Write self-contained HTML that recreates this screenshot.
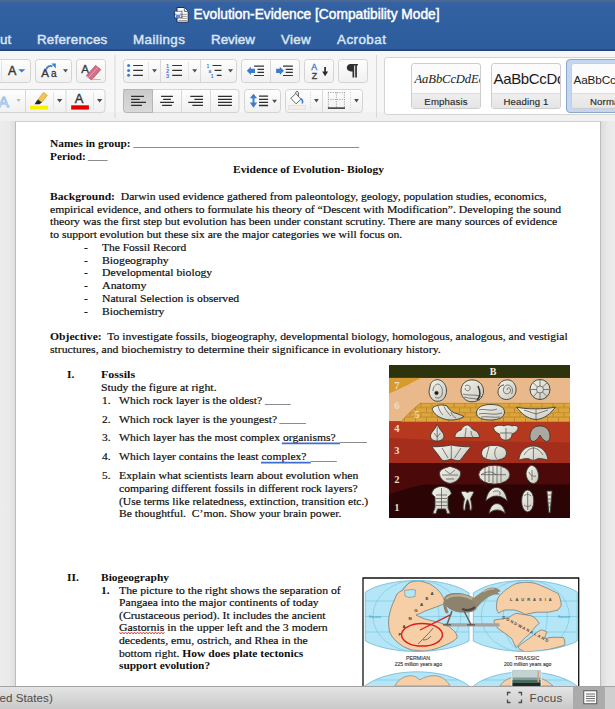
<!DOCTYPE html>
<html><head><meta charset="utf-8">
<style>
*{margin:0;padding:0;box-sizing:border-box}
html,body{width:615px;height:709px;overflow:hidden;background:#e9e9e9;font-family:"Liberation Sans",sans-serif}
.abs{position:absolute}
#title{left:0;top:0;width:615px;height:51px;background:linear-gradient(#4a6890 0,#4a6890 1.5px,#3462a2 2.5px,#3060a0 20px,#2e5c9d 49px,#22427a 50px,#22427a 51px)}
.tt{color:#fff;font-size:13.75px;white-space:nowrap;-webkit-text-stroke:0.45px #fff}
.tab{color:#dde5f2;font-size:13.4px;white-space:nowrap;top:32px;-webkit-text-stroke:0.45px #dde5f2}
#ribbon{left:0;top:51px;width:615px;height:70px;background:#f6f6f6}
#rband{left:0;top:112px;width:615px;height:9px;background:#f1f1f1}
#rline{left:0;top:121px;width:615px;height:1px;background:#c9c9c9}
#page{left:15px;top:121px;width:586px;height:565px;background:#fff;border-left:1px solid #bdbdbd;border-right:1px solid #bdbdbd;border-top:1px solid #cfcfcf}
#mleft{left:0;top:121px;width:15px;height:565px;background:linear-gradient(to right,#ececec 0,#eaeaea 9px,#dedede 15px)}
#mright{left:601px;top:121px;width:14px;height:565px;background:linear-gradient(to right,#dcdcdc 0,#e8e8e8 6px,#ececec 14px)}
#status{left:0;top:686px;width:615px;height:23px;background:linear-gradient(#e4e4e4,#c9c9c9);border-top:1px solid #a3a3a3}
.doc{font-family:"Liberation Serif",serif;font-size:11.5px;color:#0d0d0d;white-space:nowrap;line-height:13px;-webkit-text-stroke:0.18px #0d0d0d}
.b{font-weight:bold}
.doc b{-webkit-text-stroke:0}

.btn{background:linear-gradient(#fdfdfd,#f1f1f1);border:1px solid #d2d2d2;border-radius:3px}
.vsep{width:1px;background:#dedede}
.card{background:#fbfbfb;border:1px solid #cdcdcd;border-radius:3px;overflow:hidden}
.card .lab{position:absolute;left:0;right:0;bottom:0;height:15px;background:linear-gradient(#eeeeee,#e5e5e5);border-top:1px solid #dedede;font-size:9.6px;color:#2a2a2a;text-align:center;line-height:15px;letter-spacing:0.15px;-webkit-text-stroke:0.15px #2a2a2a}
.smp{position:absolute;white-space:nowrap;color:#222}
</style></head><body>
<div id="title" class="abs"></div>
<svg class="abs" style="left:174px;top:7px" width="15" height="16"><path d="M3 0.5H10.5L14.2 4.2V15.2H3Z" fill="#fbfbfb" stroke="#1b2f55" stroke-width="1"/><path d="M10.3 0.8V4.4H14" fill="#dfe6f0" stroke="#1b2f55" stroke-width="0.7"/><path d="M8 7.4h5M8 9.4h5M8 11.4h5M4.5 13.5h8.5" stroke="#8d8a80" stroke-width="0.8"/><rect x="0.6" y="4.3" width="7.3" height="6.6" fill="#eef3fb" stroke="#1b2f55" stroke-width="0.8"/><rect x="1" y="4.7" width="6.5" height="1.4" fill="#ffffff"/><path d="M1.6 6.6l1.3 3.6l1.1-2.4l1.1 2.4l1.3-3.6" stroke="#3a68b0" stroke-width="0.9" fill="none"/></svg>
<div class="abs tt" style="left:193.5px;top:6.5px">Evolution-Evidence [Compatibility Mode]</div>
<div class="abs tab" style="left:0px">ut</div>
<div class="abs tab" style="left:37px;letter-spacing:0.2px">References</div>
<div class="abs tab" style="left:133px;letter-spacing:0.4px">Mailings</div>
<div class="abs tab" style="left:211px">Review</div>
<div class="abs tab" style="left:281px;letter-spacing:0.3px">View</div>
<div class="abs tab" style="left:337px;letter-spacing:0.45px">Acrobat</div>
<div id="ribbon" class="abs"></div>
<div id="rband" class="abs"></div>
<div id="rline" class="abs"></div>

<svg class="abs" style="left:0;top:51px" width="615" height="70" viewBox="0 51 615 70">
<defs>
<linearGradient id="bg1" x1="0" y1="0" x2="0" y2="1"><stop offset="0" stop-color="#fefefe"/><stop offset="1" stop-color="#f0f0f0"/></linearGradient>
<linearGradient id="sel" x1="0" y1="0" x2="0" y2="1"><stop offset="0" stop-color="#cbcbcb"/><stop offset="1" stop-color="#d9d9d9"/></linearGradient>
</defs>
<g fill="url(#bg1)" stroke="#d3d3d3" stroke-width="1">
<rect x="-5.5" y="59.5" width="36" height="23" rx="3"/>
<rect x="35.5" y="59.5" width="36" height="23" rx="3"/>
<rect x="76.5" y="59.5" width="29" height="23" rx="3"/>
<rect x="123.5" y="59.5" width="113" height="23" rx="3"/>
<rect x="241.5" y="59.5" width="58" height="23" rx="3"/>
<rect x="304.5" y="59.5" width="29" height="23" rx="3"/>
<rect x="338.5" y="59.5" width="29" height="23" rx="3"/>
<rect x="-5.5" y="89.5" width="110.5" height="23" rx="3"/>
<rect x="123.5" y="89.5" width="115.5" height="23" rx="3"/>
<rect x="244.5" y="89.5" width="36" height="23" rx="3"/>
<rect x="285.5" y="89.5" width="77" height="23" rx="3"/>
</g>
<path d="M123.5 89.5 H152.5 V112.5 H126.5 A3 3 0 0 1 123.5 109.5 V92.5 A3 3 0 0 1 126.5 89.5Z" fill="url(#sel)" stroke="#b5b5b5" stroke-width="1"/>
<g stroke="#d8d8d8" stroke-width="1">
<path d="M115 55V118M376.5 55V118"/>
<path d="M160.5 60V82M200.5 60V82M270.5 60V82M181.5 90V112M210.5 90V112M322.5 90V112M25.5 90V112M66 90V112"/>
</g>
<g stroke="#e4e4e4" stroke-width="1">
<path d="M1.5 61V81M148.5 62V80M188.5 62V80M53.5 92V110M93.5 92V110"/>
</g>
<g stroke="#d0d0d0" stroke-width="1" stroke-dasharray="1 1.5">
<path d="M310.5 92V110M350.5 92V110"/>
</g>
<!-- dropdown arrows -->
<g fill="#4d4d4d">
<path d="M63 69.2h5l-2.5 3.4z"/>
<path d="M152 69.2h5l-2.5 3.4z"/>
<path d="M192.2 69.2h5l-2.5 3.4z"/>
<path d="M228 69.2h5l-2.5 3.4z"/>
<path d="M57 99h5.3l-2.65 3.6z"/>
<path d="M97 99h5.3l-2.65 3.6z"/>
<path d="M272.2 99.7h4.8l-2.4 3.2z"/>
<path d="M314 99.1h4.8l-2.4 3.4z"/>
<path d="M354.1 99.1h4.8l-2.4 3.4z"/>
</g>
<path d="M16.5 99h4.2l-2.1 3.2z" fill="#b9b9b9"/>
<!-- font size A -->
<text x="8" y="75" font-family="Liberation Sans" font-size="12.5" fill="#353535" stroke="#353535" stroke-width="0.4">A</text>
<path d="M18.2 69.2h7.1l-3.55 3.4z" fill="#3d7ccc"/>
<!-- change case Aa -->
<text x="41.2" y="76.8" font-family="Liberation Sans" font-size="11.5" fill="#353535" stroke="#353535" stroke-width="0.35">A</text>
<text x="51" y="76.8" font-family="Liberation Sans" font-size="10" fill="#353535" stroke="#353535" stroke-width="0.3">a</text>
<path d="M46.2 69.5 C47 66.5 50 65.3 52.5 66.3" stroke="#3d7ccc" stroke-width="1.8" fill="none"/>
<path d="M51.5 63.5 L55.8 63.5 L55.8 68.5 Z" fill="#3d7ccc"/>
<!-- clear formatting -->
<text x="81.2" y="72.6" font-family="Liberation Sans" font-size="11.5" fill="#3a3a3a" stroke="#3a3a3a" stroke-width="0.3">A</text>
<path d="M86.3 75.8 L95.6 65.4 L100.8 69.6 L91.5 80 Z" fill="#d66c86" stroke="#a94561" stroke-width="0.7"/>
<path d="M86.3 75.8 L88.5 77.7 L97.8 67.3" stroke="#efb1c0" stroke-width="0.8" fill="none"/>
<path d="M93 79.5H100.5" stroke="#aaa" stroke-width="0.8"/>
<!-- bullets -->
<g fill="#3d7ccc"><circle cx="128.6" cy="65.5" r="1.5"/><circle cx="128.6" cy="70.4" r="1.5"/><circle cx="128.6" cy="75.3" r="1.5"/></g>
<g stroke="#333" stroke-width="1.2"><path d="M133.2 65.5H142.9M133.2 70.4H142.9M133.2 75.3H142.9"/></g>
<g fill="#3d7ccc" font-family="Liberation Sans" font-weight="bold" font-size="5.6"><text x="165.9" y="67.6">1</text><text x="165.9" y="72.6">2</text><text x="165.9" y="77.6">3</text></g>
<g stroke="#333" stroke-width="1.2"><path d="M172.2 65.5H182M172.2 70.4H182M172.2 75.3H182"/></g>
<g fill="#3d7ccc" font-family="Liberation Sans" font-weight="bold" font-size="5"><text x="206.5" y="67.8">1</text><text x="208.6" y="73">a</text><text x="210.8" y="77.8">1</text></g>
<g stroke="#333" stroke-width="1.2"><path d="M212.5 65.5H221.5M214.6 70.4H221.5M216.8 75.3H221.5"/></g>
<!-- indent -->
<path d="M246.8 70.8 L250.9 66.7 V68.8 H255 V72.9 H250.9 V75.1 Z" fill="#3d7ccc"/>
<g stroke="#333" stroke-width="1.2"><path d="M254.1 66.2H264M257.5 69.3H264M257.5 72.4H264M254.1 75.5H264"/></g>
<path d="M283.9 70.8 L279.8 66.7 V68.8 H276.1 V72.9 H279.8 V75.1 Z" fill="#3d7ccc"/>
<g stroke="#333" stroke-width="1.2"><path d="M283 66.2H292.9M285.7 69.3H292.9M285.7 72.4H292.9M283 75.5H292.9"/></g>
<!-- sort -->
<text x="311.3" y="69.8" font-family="Liberation Sans" font-size="8.8" fill="#3d7ccc" stroke="#3d7ccc" stroke-width="0.35">A</text>
<text x="311.8" y="78.9" font-family="Liberation Sans" font-size="8.8" fill="#444" stroke="#444" stroke-width="0.35">Z</text>
<path d="M325.1 67V73" stroke="#2a2a2a" stroke-width="1.7"/>
<path d="M322.1 71.6H328.1L325.1 76.2Z" fill="#2a2a2a"/>
<!-- pilcrow -->
<path d="M350.5 64 H357.9 V65.6 H356.9 V77.5 H355.2 V65.6 H354.2 V77.5 H352.5 V71.6 C349 71.6 346.8 70 346.8 67.8 C346.8 65.6 348.7 64 350.5 64 Z" fill="#303030"/>
<!-- text effects A outline -->
<text x="-1.5" y="106.6" font-family="Liberation Sans" font-size="15.5" fill="#fbfdff" stroke="#96bfe8" stroke-width="0.9">A</text>
<!-- highlighter -->
<path d="M38 99.5 L43.5 92.3 L47.3 95.3 L41.8 102.5 Z" fill="#f3c44e" stroke="#c89a26" stroke-width="0.6"/>
<path d="M38 99.5 L41.8 102.5 L39.5 104.2 L34.6 104.2 L36.6 101 Z" fill="#252525"/>
<rect x="30" y="105.7" width="18" height="3.9" fill="#f6f300"/>
<!-- font color -->
<text x="74.8" y="103.2" font-family="Liberation Sans" font-size="13" fill="#333" stroke="#333" stroke-width="0.35">A</text>
<rect x="71.2" y="105.3" width="17.7" height="4.3" fill="#e30000"/>
<!-- align -->
<g stroke="#2e2e2e" stroke-width="1.3">
<path d="M131.1 96.3H144M131.1 99.3H139.7M131.1 102.3H146M131.1 105.4H142"/>
<path d="M161.1 96.3H172.9M163.1 99.3H170.9M160.1 102.3H173.9M162.1 105.4H171.9"/>
<path d="M190.3 96.4H203M194.4 99.4H203M188.2 102.3H203M192.4 105.4H203"/>
<path d="M218 96.4H231.9M218 99.4H231.9M218 102.3H231.9M218 105.4H231.9"/>
</g>
<!-- line spacing -->
<path d="M253.5 93.8 L257.2 98.2 H249.8 Z M253.5 107.7 L257.2 102.6 H249.8 Z" fill="#3d7ccc"/>
<path d="M253.5 97V103.5" stroke="#3d7ccc" stroke-width="2"/>
<g stroke="#2e2e2e" stroke-width="1.3"><path d="M259 96.2H268.1M259 99.3H268.1M259 102.4H268.1M259 105.5H268.1"/></g>
<!-- shading -->
<path d="M290.8 98.2 L295.8 93.6 L301 99.2 L296 103.8 Z" fill="#fff" stroke="#5a5a5a" stroke-width="0.9"/>
<path d="M295.8 93.6 C295.5 91 298 90.6 298.3 92.6 L298.3 96.5" stroke="#444" stroke-width="0.9" fill="none"/>
<path d="M300.3 98.5 C302.5 99.5 303 101.5 302.2 103.5" stroke="#3d7ccc" stroke-width="1.6" fill="none"/>
<rect x="288.5" y="105.3" width="17" height="3.9" fill="#f2efe8" stroke="#d9d9d9" stroke-width="0.6"/>
<!-- borders -->
<g stroke="#8d8d8d" stroke-width="0.9" stroke-dasharray="1 1.3">
<path d="M328.4 92.2V107M336.4 92.2V107M344.4 92.2V107M328 92.6H345M328 99.5H345"/>
</g>
<path d="M327.9 108.1H345" stroke="#222" stroke-width="1.4"/>
</svg>

<!-- styles gallery -->
<div class="abs" style="left:384px;top:57px;width:240px;height:58px;background:#fff;border:1px solid #d5d5d5;border-radius:3px"></div>
<div class="abs card" style="left:411px;top:63px;width:70px;height:46px"><div class="lab">Emphasis</div><div class="smp" style="font-family:'Liberation Serif',serif;font-style:italic;font-size:12.6px;left:2.5px;top:8px;letter-spacing:-0.1px">AaBbCcDdEe</div></div>
<div class="abs card" style="left:491px;top:63px;width:70px;height:46px"><div class="lab">Heading 1</div><div class="smp" style="font-size:15px;left:1.5px;top:6px;letter-spacing:-0.35px;color:#1a1a1a">AaBbCcDd</div></div>
<div class="abs" style="left:566px;top:59px;width:60px;height:54px;background:#c5d7ee;border:1px solid #8aa6cc;border-radius:4px"></div>
<div class="abs card" style="left:571px;top:63px;width:60px;height:46px"><div class="lab" style="text-align:left;padding-left:18px">Normal</div><div class="smp" style="font-size:11.7px;left:1.5px;top:9px;letter-spacing:-0.1px">AaBbCcDd</div></div>

<div id="mleft" class="abs"></div><div id="mright" class="abs"></div><div id="page" class="abs"></div>
<!--DOC-->
<div class="abs doc" style="left:49.8px;top:136.90px;font-size:11.0px;transform:scaleX(1.0329);transform-origin:0 0"><b>Names in group:</b></div>
<div class="abs doc" style="left:49.8px;top:149.80px;font-size:11.0px;transform:scaleX(1.0250);transform-origin:0 0"><b>Period:</b></div>
<div class="abs doc" style="left:233.4px;top:162.50px;font-size:11.0px;transform:scaleX(1.0396);transform-origin:0 0"><b>Evidence of Evolution- Biology</b></div>
<div class="abs doc" style="left:49.8px;top:189.80px;font-size:11.0px;transform:scaleX(1.0560);transform-origin:0 0"><b>Background:</b>&nbsp; Darwin used evidence gathered from paleontology, geology, population studies, economics,</div>
<div class="abs doc" style="left:49.8px;top:202.55px;font-size:11.0px;transform:scaleX(1.0605);transform-origin:0 0">empirical evidence, and others to formulate his theory of “Descent with Modification”. Developing the sound</div>
<div class="abs doc" style="left:49.8px;top:215.30px;font-size:11.0px;transform:scaleX(1.0664);transform-origin:0 0">theory was the first step but evolution has been under constant scrutiny. There are many sources of evidence</div>
<div class="abs doc" style="left:49.8px;top:228.05px;font-size:11.0px;transform:scaleX(1.0577);transform-origin:0 0">to support evolution but these six are the major categories we will focus on.</div>
<div class="abs doc" style="left:84.3px;top:240.80px;font-size:11.0px;transform:scaleX(1.0400);transform-origin:0 0">-</div>
<div class="abs doc" style="left:101.5px;top:240.80px;font-size:11.0px;transform:scaleX(1.0437);transform-origin:0 0">The Fossil Record</div>
<div class="abs doc" style="left:84.3px;top:253.55px;font-size:11.0px;transform:scaleX(1.0400);transform-origin:0 0">-</div>
<div class="abs doc" style="left:101.5px;top:253.55px;font-size:11.0px;transform:scaleX(1.0701);transform-origin:0 0">Biogeography</div>
<div class="abs doc" style="left:84.3px;top:266.30px;font-size:11.0px;transform:scaleX(1.0400);transform-origin:0 0">-</div>
<div class="abs doc" style="left:101.5px;top:266.30px;font-size:11.0px;transform:scaleX(1.0641);transform-origin:0 0">Developmental biology</div>
<div class="abs doc" style="left:84.3px;top:279.05px;font-size:11.0px;transform:scaleX(1.0400);transform-origin:0 0">-</div>
<div class="abs doc" style="left:101.5px;top:279.05px;font-size:11.0px;transform:scaleX(1.0866);transform-origin:0 0">Anatomy</div>
<div class="abs doc" style="left:84.3px;top:291.80px;font-size:11.0px;transform:scaleX(1.0400);transform-origin:0 0">-</div>
<div class="abs doc" style="left:101.5px;top:291.80px;font-size:11.0px;transform:scaleX(1.0618);transform-origin:0 0">Natural Selection is observed</div>
<div class="abs doc" style="left:84.3px;top:304.55px;font-size:11.0px;transform:scaleX(1.0400);transform-origin:0 0">-</div>
<div class="abs doc" style="left:101.5px;top:304.55px;font-size:11.0px;transform:scaleX(1.0526);transform-origin:0 0">Biochemistry</div>
<div class="abs doc" style="left:49.8px;top:330.05px;font-size:11.0px;transform:scaleX(1.0575);transform-origin:0 0"><b>Objective:</b>&nbsp; To investigate fossils, biogeography, developmental biology, homologous, analogous, and vestigial</div>
<div class="abs doc" style="left:49.8px;top:342.80px;font-size:11.0px;transform:scaleX(1.0670);transform-origin:0 0">structures, and biochemistry to determine their significance in evolutionary history.</div>
<div class="abs doc" style="left:67.2px;top:368.30px;font-size:11.0px;transform:scaleX(1.0400);transform-origin:0 0"><b>I.</b></div>
<div class="abs doc" style="left:101.4px;top:368.30px;font-size:11.0px;transform:scaleX(1.0934);transform-origin:0 0"><b>Fossils</b></div>
<div class="abs doc" style="left:101.1px;top:381.05px;font-size:11.0px;transform:scaleX(1.0719);transform-origin:0 0">Study the figure at right.</div>
<div class="abs doc" style="left:101.6px;top:393.60px;font-size:11.0px;transform:scaleX(1.0400);transform-origin:0 0">1.</div>
<div class="abs doc" style="left:118.9px;top:393.60px;font-size:11.0px;transform:scaleX(1.0487);transform-origin:0 0">Which rock layer is the oldest?</div>
<div class="abs doc" style="left:101.6px;top:412.50px;font-size:11.0px;transform:scaleX(1.0400);transform-origin:0 0">2.</div>
<div class="abs doc" style="left:118.9px;top:412.50px;font-size:11.0px;transform:scaleX(1.0541);transform-origin:0 0">Which rock layer is the youngest?</div>
<div class="abs doc" style="left:101.6px;top:431.40px;font-size:11.0px;transform:scaleX(1.0400);transform-origin:0 0">3.</div>
<div class="abs doc" style="left:118.9px;top:431.40px;font-size:11.0px;transform:scaleX(1.0566);transform-origin:0 0">Which layer has the most complex organisms?</div>
<div class="abs doc" style="left:101.6px;top:450.30px;font-size:11.0px;transform:scaleX(1.0400);transform-origin:0 0">4.</div>
<div class="abs doc" style="left:118.9px;top:450.30px;font-size:11.0px;transform:scaleX(1.0529);transform-origin:0 0">Which layer contains the least complex?</div>
<div class="abs doc" style="left:101.6px;top:469.20px;font-size:11.0px;transform:scaleX(1.0400);transform-origin:0 0">5.</div>
<div class="abs doc" style="left:118.9px;top:469.20px;font-size:11.0px;transform:scaleX(1.0676);transform-origin:0 0">Explain what scientists learn about evolution when</div>
<div class="abs doc" style="left:118.9px;top:481.95px;font-size:11.0px;transform:scaleX(1.0550);transform-origin:0 0">comparing different fossils in different rock layers?</div>
<div class="abs doc" style="left:118.9px;top:494.70px;font-size:11.0px;transform:scaleX(1.0500);transform-origin:0 0">(Use terms like relatedness, extinction, transition etc.)</div>
<div class="abs doc" style="left:118.9px;top:507.45px;font-size:11.0px;transform:scaleX(1.0544);transform-origin:0 0">Be thoughtful.&nbsp; C’mon. Show your brain power.</div>
<div class="abs doc" style="left:67.1px;top:570.90px;font-size:11.0px;transform:scaleX(1.0400);transform-origin:0 0"><b>II.</b></div>
<div class="abs doc" style="left:101.4px;top:570.90px;font-size:11.0px;transform:scaleX(1.0397);transform-origin:0 0"><b>Biogeography</b></div>
<div class="abs doc" style="left:101.4px;top:583.53px;font-size:11.0px;transform:scaleX(1.0400);transform-origin:0 0"><b>1.</b></div>
<div class="abs doc" style="left:119.0px;top:583.53px;font-size:11.0px;transform:scaleX(1.0677);transform-origin:0 0">The picture to the right shows the separation of</div>
<div class="abs doc" style="left:119.0px;top:596.16px;font-size:11.0px;transform:scaleX(1.0613);transform-origin:0 0">Pangaea into the major continents of today</div>
<div class="abs doc" style="left:119.0px;top:608.79px;font-size:11.0px;transform:scaleX(1.0629);transform-origin:0 0">(Crustaceous period). It includes the ancient</div>
<div class="abs doc" style="left:119.0px;top:621.42px;font-size:11.0px;transform:scaleX(1.0746);transform-origin:0 0">Gastornis in the upper left and the 3 modern</div>
<div class="abs doc" style="left:119.0px;top:634.05px;font-size:11.0px;transform:scaleX(1.0638);transform-origin:0 0">decedents, emu, ostrich, and Rhea in the</div>
<div class="abs doc" style="left:119.0px;top:646.68px;font-size:11.0px;transform:scaleX(1.0508);transform-origin:0 0">bottom right. <b>How does plate tectonics</b></div>
<div class="abs doc" style="left:119.0px;top:659.31px;font-size:11.0px;transform:scaleX(1.0314);transform-origin:0 0"><b>support evolution?</b></div>
<svg class="abs" style="left:0;top:0" width="615" height="686">
<g stroke="#8c8c8c" stroke-width="1">
<path d="M133.3 147.5H359.2"/>
<path d="M87.8 160.5H107.6"/>
<path d="M264.8 404.5H290.8"/>
<path d="M279.4 423.5H306"/>
<path d="M340 442.5H367"/>
<path d="M310.8 461.5H336.8"/>
</g>
<g stroke="#3d6fd2" stroke-width="1.8">
<path d="M281.8 443.3H340"/>
<path d="M261 462.6H310.8"/>
</g>
<path d="M119.5 632 l1.5 2 l1.5 -2 l1.5 2 l1.5 -2 l1.5 2 l1.5 -2 l1.5 2 l1.5 -2 l1.5 2 l1.5 -2 l1.5 2 l1.5 -2 l1.5 2 l1.5 -2 l1.5 2 l1.5 -2 l1.5 2 l1.5 -2 l1.5 2 l1.5 -2 l1.5 2 l1.5 -2 l1.5 2 l1.5 -2 l1.5 2 l1.5 -2 l1.5 2 l1.5 -2 l1.5 2 l1.5 -2" stroke="#e43a3a" stroke-width="0.9" fill="none"/>
</svg>
<svg class="abs" style="left:389px;top:365px" width="181" height="153" viewBox="389 365 181 153">
<defs>
<pattern id="brick" x="0" y="402.8" width="11" height="9.5" patternUnits="userSpaceOnUse">
<rect width="11" height="9.5" fill="#dca63c"/>
<path d="M0 0.4H11M0 4.75H11M3 0.4V4.75M8.5 4.75V9.5" stroke="#b97f24" stroke-width="0.75"/>
</pattern>
<linearGradient id="fg" x1="0" y1="0" x2="1" y2="1"><stop offset="0" stop-color="#f4f4ee"/><stop offset="1" stop-color="#c9c9c0"/></linearGradient>
</defs>
<rect x="389" y="365" width="181" height="153" fill="#2b0505"/>
<path d="M389 462.5 H570 V484.5 H428 C418 485 406 489 389 494 Z" fill="#4c0909"/>
<path d="M389 421 H570 V463 H389 Z" fill="#a42d1c"/>
<path d="M389 419 C420 420 500 422 570 421 V442.4 C500 442.4 430 440 389 438 Z" fill="#b6391f"/>
<rect x="389" y="377.6" width="181" height="43.5" fill="#eab98b"/>
<path d="M389 377.6 H422 C414 381 404 388 389 393.5 Z" fill="#d69b2f"/>
<path d="M421 402.8 H570 V421.8 H401 C406 416 414 408 421 402.8 Z" fill="url(#brick)"/>
<path d="M401 421.8 C406 416 414 408 421 402.8" stroke="#b97f24" stroke-width="0.8" fill="none"/>
<rect x="389" y="365" width="181" height="12.8" fill="#2d330c"/>
<g font-family="Liberation Serif" font-weight="bold" font-size="10.5" fill="#f1dcc4" text-anchor="middle">
<text x="493" y="375.3" font-size="10" fill="#f4efe4">B</text>
<text x="396.8" y="389">7</text>
<text x="396.8" y="408.5">6</text>
<text x="416.8" y="417.5">5</text>
<text x="396.8" y="431.5">4</text>
<text x="396.8" y="453.5">3</text>
<text x="396.8" y="483">2</text>
<text x="396.8" y="511">1</text>
</g>
<g fill="url(#fg)" stroke="#3b3b36" stroke-width="0.9">
<!-- row 7/6 -->
<path d="M430 387 C430 382 434 380 437 379.6 C441 379.6 446 383 446.5 390 C446.5 397 443 401.3 437.5 401.3 C432 401.3 429 396 429 391 Z"/>
<path d="M461 391 C461 384 466 379.9 472 379.9 C479 379.9 483.5 385 483.5 391 C483.5 397 479 401.8 472 401.8 C466 401.8 461 397 461 391 Z"/>
<path d="M498.5 386 C500 381 505 379.5 509 380 C514 381 516.5 386 516 391 C515.5 396 511 399.5 506.5 399.5 C501.5 399.5 498 396 498 392 C498 388 501 385 504 385" />
<ellipse cx="540" cy="389.5" rx="10" ry="10"/>
<!-- row 5 -->
<path d="M432 409 C434 405 442 404 447 406 C449 410 453 413 458 414 C461 415 463 416 464 416.5 C459 420 450 421 444 419 C438 417 434 414 432 409 Z"/>
<path d="M476.5 413 C476.5 407 483 404.5 491 404.5 C499 404.5 504.5 407 504.5 412 C504.5 417 499 420 491 420 C483 420 476.5 418 476.5 413 Z"/>
<path d="M516.5 407 C525 409.5 545 409.5 555.5 407 C551 413 545 419 536 419.5 C527 419 521 413 516.5 407 Z"/>
<!-- row 4 -->
<path d="M437.2 424.4 C439 429 444 433 444 436 C444 439 441 441 437.2 441 C433.5 441 430.4 439 430.4 436 C430.4 433 435.5 429 437.2 424.4 Z"/>
<path d="M454.8 437.6 C455 433 458 431 461 430 C463 426 466 424.9 468 425 C471 426 472 430 474 430 C477 431 479.6 434 479.6 437.6 Z"/>
<path d="M493.5 428 C496 425 501 424.6 504 426 C506 424.6 510 424.6 512 426 C515 424.6 518 426 518.2 428 C517 432 514 433 512 434 C512 438 509 440.2 506 440.2 C502 440.2 499.5 438 499.5 434 C497 433 494 431 493.5 428 Z"/>
<path d="M529.9 437 C529.9 431 533 425.9 540 425.9 C547 425.9 550 431 550 437 C550 440 548 441.5 546 441.5 C543 440 541 437 540 435 C539 437 537 440 534 441.5 C531.5 441.5 529.9 440 529.9 437 Z" fill="#a9a9a2"/>
<!-- row 3 -->
<path d="M431.8 446.8 C440 446.8 447 446 451.3 444.9 C455.5 446 462 446.8 470.9 446.8 C467 451 463 457 460 460.5 C457 461 454 460 451.3 459 C448.5 460 445.5 461 442.5 460.5 C439.5 457 435.5 451 431.8 446.8 Z"/>
<path d="M481.5 453 C482 448 487 445.4 494 445.4 C501 445.4 506.5 448 506.5 453 C506.5 458 501 460.3 494 460.3 C487 460.3 481.5 458 481.5 453 Z"/>
<path d="M518.8 460.3 C519.5 452 525 446 533.4 446 C541.5 446 547.3 452 548 460.3 C544 459 540 458 537 459 C535.5 460 534 460.3 533.4 460.3 C532.5 460.3 531 460 529.5 459 C526 458 522.5 459 518.8 460.3 Z"/>
<!-- row 2 -->
<path d="M439.6 472 C441 469 446 467.5 450 466.4 C454 467.5 459 469 460.6 472 C461 477 458 482 450 483.5 C442 482 439 477 439.6 472 Z"/>
<ellipse cx="494.3" cy="474.7" rx="15.6" ry="9.4"/>
<path d="M526 473 C527 468 530 465.3 532 465.3 C535 466 538.5 470 538.5 476 C538.5 481 536 483.5 533 483.5 C529 483 526 478 526 473 Z"/>
<!-- row 1 -->
<path d="M441.5 486.4 C447 486.4 451.3 490 451.3 494 C450 495 449 496 448 497 V507 C448 509 450 511 450 513.7 H447 L445.5 509 H437.5 L436 513.7 H433 C433 511 435 509 435 507 V497 C434 496 433 495 431.8 494 C431.8 490 436 486.4 441.5 486.4 Z"/>
<path d="M461.1 492 C463 490.8 466 491.5 467.5 492.5 C469 491.5 472 490.8 473.8 492 C473 495 471 497 470.5 499 C471.5 503 472.5 507 471.5 510.3 H470 C469.5 506 469 502 467.5 499.5 C466 502 465.5 506 465 510.3 H463.5 C462.5 507 463.5 503 464.5 499 C464 497 462 495 461.1 492 Z"/>
<path d="M485.8 501 C487 493 491 487.4 496.5 487.4 C502 487.4 506 493 507.3 501 C504 498 501 496 496.5 496 C492 496 489 498 485.8 501 Z"/>
<path d="M489 513.4 C490 507 493 503.6 497 503.6 C501 503.6 504 507 505.3 513.4 C502 511 500 510 497 510 C494 510 492 511 489 513.4 Z"/>
<ellipse cx="527.7" cy="501" rx="6.1" ry="11"/>
<path d="M546.9 491 H552.1 L550.2 512.7 H548.8 Z"/>
</g>
<g stroke="#4d4d47" stroke-width="0.7" fill="none">
<path d="M433 391 C433 386 436 384 438 384 C442 385 443 390 442 395 C441 398 437 399 435 397"/><circle cx="436.5" cy="393" r="1.8" fill="#161616"/>
<path d="M465 386 C468 384 471 386 470 389 C469 392 465 391 465 388 M463 394 C470 396 477 394 482 397 M464 397 C470 399 476 398 480 400"/>
<path d="M478 386 C481 392 481 396 477 400" stroke="#333" stroke-width="1.5"/>
<path d="M507 390 C507 387 510 387 510.5 390 C511 393 507 395 504.5 393 C502 390 504 385 508 385 C512.5 385.5 513.5 391 511.5 394"/>
<circle cx="540" cy="389.5" r="3.5"/><path d="M540 380 V386 M540 393 V399.5 M530.5 389.5 H536.5 M543.5 389.5 H549.5 M533.5 383 L537.5 387 M542.5 392 L547 396.5 M547 383 L542.5 387 M537.5 392 L533.5 396.5"/>
<path d="M438 406 C439 410 441 413 443 415 M444 406.5 C446 411 449 414 451 416 M451 412 C452 415 454 417 456 418"/>
<path d="M479 410 C484 408 490 412 497 409 M479 414 C486 412 492 416 502 413 M481 417 C487 416 494 418 500 417"/>
<path d="M536 409.5 V419 M524 410 L536 414 L548 410"/>
<path d="M437.2 427 V441 M434 433 L437.2 437 L440.4 433"/>
<path d="M466 428 C466 432 465 435 465 437 M471 431 C471 434 472 436 473 437"/>
<path d="M506 428 V440 M500 433 H512"/>
<path d="M451.3 445 V459 M442 448 L448 458 M461 448 L454.5 458"/>
<path d="M497 447 C494 450 494 456 497 459 M489 447 L486 458"/>
<path d="M533.4 447 V460 M524 455 C527 450 531 448 533.4 448 C536 448 540 450 543 455"/>
<path d="M445 470 L450 474 L455 470 M442 475 H458 M446 479 H454"/>
<path d="M481 474.7 H506 M485 468 V481.5 M489 467 V482 M493 466 V483 M497 466 V483 M501 467 V482 M481 474.7 C487 471 492 471 496 474.7"/>
<path d="M529 472 C530 475 533 477 536 476 M532 470 V480"/>
<path d="M441.5 488 V509 M436 495 H447 M436 498.5 H447 M436 502 H447 M436 505.5 H447"/>
<path d="M493 492 C495 490.5 498 490.5 500 492 V495"/>
<path d="M527.7 492 V510 M524 496 C526 494 529 494 531 496 M524 505 C526 507 529 507 531 505"/>
<path d="M547.5 495 H551.5 M547.7 499 H551.2 M548 503 H551 M548.2 507 H550.8"/>
</g>
</svg>
<svg class="abs" style="left:362px;top:577px" width="218" height="109" viewBox="362 577 218 109">
<defs>
<clipPath id="ovL"><path d="M365.3 592 C378 584 398 580.5 417 580.5 C436 580.5 456 584 469 593 V641 C456 648 436 651.5 417 651.5 C398 651.5 378 648 365.3 641 Z"/></clipPath>
<clipPath id="ovR"><path d="M473.3 593 C486 584 506 580.5 525.3 580.5 C544 580.5 564 584 577.3 592 V641 C564 648 544 651.5 525.3 651.5 C506 651.5 486 648 473.3 641 Z"/></clipPath>
<clipPath id="ovB"><path d="M364.7 686 C378 676 398 671.8 417 671.8 C436 671.8 456 676 469.3 686 Z M473.3 686 C486 676 506 671.8 525.3 671.8 C544 671.8 564 676 577.3 686 Z"/></clipPath>
</defs>
<rect x="362" y="577" width="218" height="109" fill="#fff"/>
<g clip-path="url(#ovL)">
<rect x="360" y="578" width="115" height="75" fill="#b5e6f7"/>
<g stroke="#62bcd6" stroke-width="0.5" fill="none">
<path d="M360 601 H475 M360 616.5 H475 M360 632 H475"/>
<ellipse cx="417" cy="616" rx="22" ry="36"/><ellipse cx="417" cy="616" rx="44" ry="36"/>
</g>
<path d="M409.8 582.5 C413 581.5 416 581 420 581 C424 582 427 583 430 584 C433 586 436 588 438 590 C440 592 442 595 443 597 C444 599 444.5 602 444 604 C441 605 439 606 436 607 C432 608.5 428 610 425 611 C422 612.5 419 614 416 615 C419 616.5 422 618 425 619 C429 620 433 621 437 622 C441 623 445 624.5 448 626 C451 628 453 630 455 632 C456.5 634 457.5 636 457 638 C455 640 453 641.5 450 643 C446 645 442 646.5 438 648 C434 649.5 429 650.5 425 651 C420 651 416 650.5 412 650 C409 649 406.5 648 404 647 C401 645 398 643 395 640 C392.5 637.5 391 635 389.6 632 C389 629 388.5 625 388.5 622 C388.8 618 389.2 615 390 612 C391 608 392.5 604 394 601 C395 598.5 396 596 397 594 C399 592 401 591 403 590 C404 588.5 405 587 406 586 C407 584.5 408.5 583.5 409.8 582.5 Z" fill="#f7cfa7" stroke="#6f6f6f" stroke-width="0.7"/>
<path d="M404.5 590.5 L411 589.5 L415.5 590 L415 596.5 L409 597.5 L405 596 Z" fill="#b5e6f7" stroke="#6f6f6f" stroke-width="0.5"/>
<path d="M418 644 C421 641 424 638 427 635 C429 633 431 631 433 628 M423 640 C426 640 429 639 431 636" fill="none" stroke="#555" stroke-width="0.8"/>
<g font-family="Liberation Sans" font-weight="bold" font-size="4.4" fill="#333" text-anchor="middle"><text x="400" y="636">P</text><text x="404" y="628">A</text><text x="410" y="620">N</text><text x="416" y="612">G</text><text x="421.5" y="606">A</text><text x="427" y="600">E</text><text x="432" y="595">A</text></g>
</g>
<g clip-path="url(#ovR)">
<rect x="470" y="578" width="115" height="75" fill="#b5e6f7"/>
<g stroke="#62bcd6" stroke-width="0.5" fill="none">
<path d="M470 601 H585 M470 616.5 H585 M470 632 H585"/>
<ellipse cx="525.3" cy="616" rx="22" ry="36"/><ellipse cx="525.3" cy="616" rx="44" ry="36"/>
</g>
<path d="M508.5 588 C511 586 514 584.5 516.3 583.6 C521 582.5 526 582 530 582.5 C533 583 535 583 536 583.6 C540 585 544 587 547 588 C551 590 555 592 558 593.5 C560 597 561 601 561.3 605.6 C560 607 559 609 558 610 C554 611 550 612 547 612.2 C543 612.2 540 612.2 536 612.2 C532 613 528 614 525 614.4 C522 612 518 611 514 610 C511 610 508 610 505.2 610 C502 611 500 612 498.6 613.3 C497 611 496.5 609 496.4 606.7 C496.5 604 497 601 497.5 599 C499 596 501 594 503 592.4 C505 590 507 589 508.5 588 Z" fill="#f7cfa7" stroke="#6f6f6f" stroke-width="0.7"/>
<path d="M494.2 620 C497 619.5 500 619 503 618.9 C505 618 507 618 508.5 617.7 C511 616 514 614 516.3 613.3 C521 614 526 615 530 615.5 C532 616 534 617 536 618.9 C537 620 538 622 539.3 623.3 C537 625 535 627 533.8 628.8 C532 631 530 633 529.4 634.3 C525 637 521 642 516.3 647.5 C514 644 513 641 511.8 638.7 C509 636 506 634 503 632 C500 630 497 628 495.3 625.5 C494 623 494 621 494.2 620 Z" fill="#f7cfa7" stroke="#6f6f6f" stroke-width="0.7"/>
<path d="M541.5 629.9 C543 630 545 631 547 632 C546 634 545 636 544.8 638.7 C550 637 556 637 563.5 637.6 C565 640 565 643 564.6 645.3 C558 647 552 649 547 649.7 C540 651 532 652 525 651.9 C521 650 519 649 518 647 C522 643 527 640 531 637 C535 634 538 631 541.5 629.9 Z" fill="#f7cfa7" stroke="#6f6f6f" stroke-width="0.7"/>
<g font-family="Liberation Sans" font-weight="bold" font-size="4" fill="#444"><text x="510" y="601" letter-spacing="3">LAURASIA</text></g>
<g font-family="Liberation Sans" font-weight="bold" font-size="4" fill="#444" transform="rotate(28 515 625)"><text x="500" y="625" letter-spacing="1.5">GONDWANALAND</text></g>
</g>
<g clip-path="url(#ovB)">
<rect x="360" y="670" width="225" height="20" fill="#b5e6f7"/>
<path d="M360 680 H585" stroke="#62bcd6" stroke-width="0.5"/>
<path d="M395 686 C397 681 402 677 408 676 C413 675 417 677 420 680 C424 677 430 675 438 676 C444 678 448 682 450 686 Z" fill="#f7cfa7" stroke="#777" stroke-width="0.6"/>
<path d="M500 686 C503 681 508 678 515 677 C520 677 522 680 524 683 C528 679 533 677 540 678 C546 680 550 683 553 686 Z" fill="#f7cfa7" stroke="#777" stroke-width="0.6"/>
</g>
<path d="M365.3 592 C378 584 398 580.5 417 580.5 C436 580.5 456 584 469 593 V641 C456 648 436 651.5 417 651.5 C398 651.5 378 648 365.3 641 Z" fill="none" stroke="#6fb9d6" stroke-width="0.8"/>
<path d="M473.3 593 C486 584 506 580.5 525.3 580.5 C544 580.5 564 584 577.3 592 V641 C564 648 544 651.5 525.3 651.5 C506 651.5 486 648 473.3 641 Z" fill="none" stroke="#6fb9d6" stroke-width="0.8"/>
<path d="M364.7 686 C378 676 398 671.8 417 671.8 C436 671.8 456 676 469.3 686 M473.3 686 C486 676 506 671.8 525.3 671.8 C544 671.8 564 676 577.3 686" fill="none" stroke="#6fb9d6" stroke-width="0.8"/>
<ellipse cx="422" cy="634.8" rx="20.5" ry="11.3" fill="none" stroke="#d81e1e" stroke-width="1.5"/>
<path d="M420 630 L451.3 614.4" stroke="#d81e1e" stroke-width="1.2"/>
<path d="M444 623.2 H499.5 V626.6 H446 Z" fill="#a3a3a3"/>
<!-- bird -->
<path d="M444 600 C444 595 449 593 456 593 C463 593 470 595 474 598 C478 601 478.5 606 476 609.5 C473 612.5 467 613 461 612.5 C454 612 448 609 445.5 605 Z" fill="#8d826d"/>
<path d="M446 599 C449 595.5 455 595 461 595.5 C466 596 470 597.5 473 599.5" stroke="#b8ad95" stroke-width="2.4" fill="none"/>
<path d="M462 609 C467 611 472 610 475 607" stroke="#4d463c" stroke-width="2.2" fill="none"/>
<path d="M444.8 602 C444.5 606 445.5 610 447.5 613" stroke="#8d826d" stroke-width="3" fill="none"/>
<path d="M471 600 C475 597 479 594 482.5 591.5 C485.5 589 489 587.5 493 587.5 C496 587.7 498.5 589 501 591 L497.5 592.5 L500 594.5 L495 594.5 C492 595 489 596.5 486.5 598.5 C483 601 480 604 477.5 607 Z" fill="#93876e"/>
<path d="M483 592 C487 589 491 588.5 494.5 589" stroke="#c4b9a2" stroke-width="1.1" fill="none"/>
<path d="M452 611 L447 624.5 M464 611 L471 624.5" stroke="#6a6357" stroke-width="1.5"/>
<path d="M443 624.8 H451 M467 624.8 H475" stroke="#5a5449" stroke-width="1.2"/>
<rect x="511.5" y="669.5" width="30" height="17" fill="#f2f2f2"/>
<rect x="512.5" y="670.5" width="28" height="16" fill="#7f9d93"/>
<rect x="512.5" y="670.5" width="28" height="7" fill="#c3d3d3"/>
<rect x="512.5" y="680" width="28" height="3" fill="#4d6a60"/>
<rect x="512.5" y="683" width="28" height="3" fill="#1c2a24"/>
<rect x="537.5" y="671" width="1.5" height="11" fill="#d9a090"/>
<g font-family="Liberation Sans" fill="#333" stroke="#333" stroke-width="0.12" text-anchor="middle">
<text x="418" y="659.6" font-size="5.3">PERMIAN</text>
<text x="418.3" y="665.5" font-size="5">225 million years ago</text>
<text x="527" y="659.6" font-size="5.3">TRIASSIC</text>
<text x="527.7" y="665.5" font-size="5">200 million years ago</text>
</g>
<g font-family="Liberation Sans" font-size="3.5" fill="#3aa0c8"><text x="369" y="617.5">Equator</text><text x="558" y="617.5">Equator</text></g>
<path d="M363 686 V578 H578.7 V686" fill="none" stroke="#111" stroke-width="1.3"/>
</svg>

<!--/DOC-->
<div id="status" class="abs"></div>
<div class="abs" style="left:-0.5px;top:691px;font-size:11.6px;color:#4a4a4a;white-space:nowrap;letter-spacing:0.05px">ed States)</div>
<svg class="abs" style="left:506px;top:691px" width="17" height="13"><path d="M1.5 4.5V1.5H4.5M12.5 1.5H15.5V4.5M15.5 8.5V11.5H12.5M4.5 11.5H1.5V8.5" stroke="#4a4a4a" stroke-width="1.3" fill="none"/><path d="M1 1h15v11h-15z" fill="none" stroke="#4a4a4a" stroke-width="0" /></svg>
<div class="abs" style="left:529.5px;top:691px;font-size:11.6px;color:#4a4a4a;white-space:nowrap;letter-spacing:0.3px">Focus</div>
<div class="abs" style="left:573px;top:687px;width:32px;height:22px;background:#ababab"></div>
<div class="abs" style="left:605px;top:687px;width:10px;height:22px;background:#cfcfcf"></div>
<svg class="abs" style="left:583px;top:690px" width="15" height="15"><rect x="0.75" y="0.75" width="13" height="13" fill="#fff" stroke="#555" stroke-width="1"/><path d="M3 4h9M3 6.3h9M3 8.6h9M3 10.9h9" stroke="#666" stroke-width="1"/></svg>
</body></html>
